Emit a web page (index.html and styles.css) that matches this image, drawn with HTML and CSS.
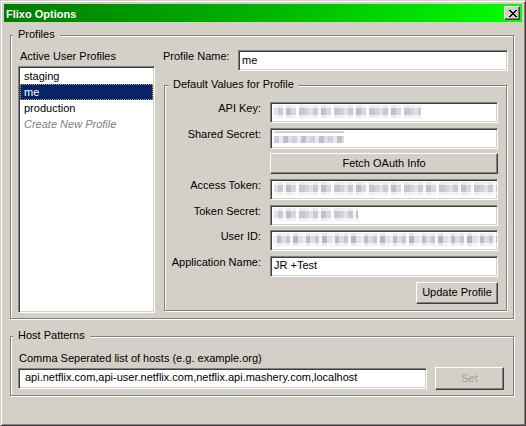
FILE: index.html
```html
<!DOCTYPE html>
<html>
<head>
<meta charset="utf-8">
<title>Flixo Options</title>
<link rel="stylesheet" href="styles.css">
</head>
<body>
<div class="window">
  <div class="titlebar">
    <span class="title">Flixo Options</span>
    <div class="close">
      <svg width="8" height="7" viewBox="0 0 8 7" shape-rendering="crispEdges">
        <path fill="#000" d="M0 0h2v1H0zM6 0h2v1H6zM1 1h2v1H1zM5 1h2v1H5zM2 2h4v1H2zM3 3h2v1H3zM2 4h4v1H2zM1 5h2v1H1zM5 5h2v1H5zM0 6h2v1H0zM6 6h2v1H6z"/>
      </svg>
    </div>
  </div>
  <div class="client">
    <div class="group profiles">
      <span class="legend">Profiles</span>
      <div class="col-left">
        <div class="lbl">Active User Profiles</div>
        <div class="listbox">
          <div class="item">staging</div>
          <div class="item selected">me</div>
          <div class="item">production</div>
          <div class="item create">Create New Profile</div>
        </div>
      </div>
      <div class="col-right">
        <div class="name-row">
          <span class="name-lbl">Profile Name:</span>
          <div class="input name-input">me</div>
        </div>
        <div class="group defaults">
          <span class="legend legend-def">Default Values for Profile</span>
          <div class="form">
            <div class="row"><span class="flbl">API Key:</span><div class="input field"><span class="blur b-api"></span></div></div>
            <div class="row"><span class="flbl">Shared Secret:</span><div class="input field"><span class="blur b-shared"></span></div></div>
            <div class="row"><span class="flbl"></span><div class="btn fetch">Fetch OAuth Info</div></div>
            <div class="row"><span class="flbl">Access Token:</span><div class="input field"><span class="blur b-full"></span></div></div>
            <div class="row"><span class="flbl">Token Secret:</span><div class="input field"><span class="blur b-token"></span></div></div>
            <div class="row"><span class="flbl">User ID:</span><div class="input field"><span class="blur b-full b-user"></span></div></div>
            <div class="row"><span class="flbl">Application Name:</span><div class="input field">JR +Test</div></div>
            <div class="row row-btn"><div class="btn update">Update Profile</div></div>
          </div>
        </div>
      </div>
    </div>
    <div class="group hosts">
      <span class="legend">Host Patterns</span>
      <div class="hosts-lbl">Comma Seperated list of hosts (e.g. example.org)</div>
      <div class="hosts-row">
        <div class="input hosts-input">api.netflix.com,api-user.netflix.com,netflix.api.mashery.com,localhost</div>
        <div class="btn set disabled">Set</div>
      </div>
    </div>
  </div>
</div>
</body>
</html>
```
FILE: styles.css
```css
* { box-sizing: border-box; }
html, body { margin: 0; padding: 0; }
body {
  width: 526px;
  height: 426px;
  overflow: hidden;
  background: #d4d0c8;
  font-family: "Liberation Sans", Arial, sans-serif;
  font-size: 11px;
  color: #000;
}
.window {
  width: 526px;
  height: 426px;
  border: 1px solid;
  border-color: #d4d0c8 #404040 #404040 #d4d0c8;
  box-shadow: inset 1px 1px #fff, inset -1px -1px #808080;
  padding: 3px;
  background: #d4d0c8;
  display: flex;
  flex-direction: column;
}
.titlebar {
  height: 18px;
  flex: none;
  background: linear-gradient(to right, #007c00, #00b400 50%, #00ff00);
  display: flex;
  align-items: center;
  padding-left: 2px;
}
.title {
  flex: 1;
  color: #fff;
  font-weight: bold;
  line-height: 13px;
  margin-top: 2px;
}
.close {
  width: 16px;
  height: 14px;
  margin-right: 2px;
  border: 1px solid;
  border-color: #fff #404040 #404040 #fff;
  box-shadow: inset -1px -1px #808080, inset 1px 1px #d4d0c8;
  background: #d4d0c8;
  display: flex;
  align-items: center;
  justify-content: center;
  padding-left: 1px;
}
.close svg { display: block; }
.client {
  display: flex;
  flex-direction: column;
  padding: 13px 0 0 6px;
}
.group {
  position: relative;
  border: 1px solid #808080;
  box-shadow: inset 1px 1px #fff, 1px 1px #fff;
}
.legend {
  position: absolute;
  top: -8px;
  left: 2px;
  padding: 0 5px 0 5px;
  background: #d4d0c8;
  line-height: 13px;
  white-space: nowrap;
}
.profiles {
  width: 504px;
  height: 284px;
  padding-left: 7px;
  display: flex;
}
.col-left {
  width: 137px;
  display: flex;
  flex-direction: column;
}
.lbl {
  margin-top: 14px;
  padding-left: 2px;
  line-height: 13px;
}
.listbox {
  margin-top: 3px;
  height: 247px;
  background: #fff;
  border: 1px solid;
  border-color: #808080 #fff #fff #808080;
  box-shadow: inset 1px 1px #404040, inset -1px -1px #d4d0c8;
  padding: 1px;
}
.item {
  height: 16px;
  line-height: 16px;
  padding-left: 4px;
  white-space: nowrap;
}
.item.selected {
  background: #0a246a;
  color: #fff;
  outline: 1px dotted #b8a060;
  outline-offset: -1px;
}
.item.create {
  color: #808080;
  font-style: italic;
}
.col-right {
  width: 345px;
  margin-left: 8px;
  display: flex;
  flex-direction: column;
}
.name-row {
  margin-top: 14px;
  display: flex;
  align-items: flex-start;
}
.name-lbl {
  width: 75px;
  line-height: 13px;
}
.input {
  height: 21px;
  background: #fff;
  border: 1px solid;
  border-color: #808080 #fff #fff #808080;
  box-shadow: inset 1px 1px #404040, inset -1px -1px #d4d0c8;
  padding: 3px 3px 1px 3px;
  line-height: 13px;
  white-space: nowrap;
  overflow: hidden;
}
.name-input { width: 270px; }
.defaults {
  margin-top: 14px;
  margin-left: 1px;
  width: 343px;
  height: 226px;
}
.legend-def { left: 4px; padding: 0 4px; }
.form {
  padding-top: 16px;
  display: flex;
  flex-direction: column;
  gap: 4.67px;
}
.row {
  display: flex;
  align-items: flex-start;
  height: 21px;
}
.flbl {
  width: 96px;
  margin-right: 9px;
  text-align: right;
  line-height: 13px;
  white-space: nowrap;
}
.field { width: 228px; padding-top: 2px; }
.btn {
  background: #d4d0c8;
  border: 1px solid;
  border-color: #fff #404040 #404040 #fff;
  box-shadow: inset -1px -1px #808080, inset 1px 1px #d4d0c8;
  display: flex;
  align-items: center;
  justify-content: center;
  line-height: 13px;
  white-space: nowrap;
}
.fetch { width: 228px; height: 21px; }
.row-btn { height: 22px; justify-content: flex-end; padding-right: 8px; }
.update { width: 82px; height: 22px; }
.blur {
  display: inline-block;
  height: 13px;
  vertical-align: top;
  background:
    linear-gradient(to bottom, rgba(255,255,255,0.7) 0 3px, rgba(255,255,255,0.15) 3px 10px, rgba(255,255,255,0.75) 10px),
    repeating-linear-gradient(90deg, #dcdce2 0 4px, #c0c0cc 4px 9px, #f2f2f4 9px 12px, #b4b4c2 12px 17px, #d0d0d8 17px 22px, #fafafa 22px 25px, #bcbcc8 25px 31px, #cacad2 31px 35px);
}
.b-api { width: 147px; }
.b-shared {
  width: 70px;
  background:
    linear-gradient(to bottom, #d0d0d8 0 2px, #fff 2px 5px, rgba(255,255,255,0.15) 5px 12px, #fff 12px),
    repeating-linear-gradient(90deg, #c8c8d2 0 5px, #e4e4ea 5px 9px, #b4b4c2 9px 14px, #d8d8e0 14px 18px);
}
.b-full { width: 224px; }
.b-token { width: 84px; }
.b-user {
  background:
    linear-gradient(to bottom, rgba(255,255,255,0.7) 0 3px, rgba(255,255,255,0.15) 3px 10px, rgba(255,255,255,0.75) 10px),
    repeating-linear-gradient(90deg, #ececf0 0 3px, #b0b0be 3px 7px, #d6d6de 7px 12px, #bcbcc8 12px 16px, #f4f4f6 16px 19px, #a8a8b8 19px 24px, #dadae0 24px 29px);
}
.hosts {
  margin-top: 17px;
  width: 504px;
  height: 60px;
  padding-left: 7px;
  padding-right: 9px;
}
.hosts-lbl {
  margin-top: 15px;
  padding-left: 1px;
  line-height: 13px;
}
.hosts-row {
  margin-top: 2px;
  display: flex;
  align-items: center;
  height: 23px;
}
.hosts-input {
  width: 409px;
  padding-left: 6px;
  padding-top: 2px;
}
.set {
  margin-left: 8px;
  width: 69px;
  height: 23px;
}
.disabled { color: #a0a0a0; }
```
